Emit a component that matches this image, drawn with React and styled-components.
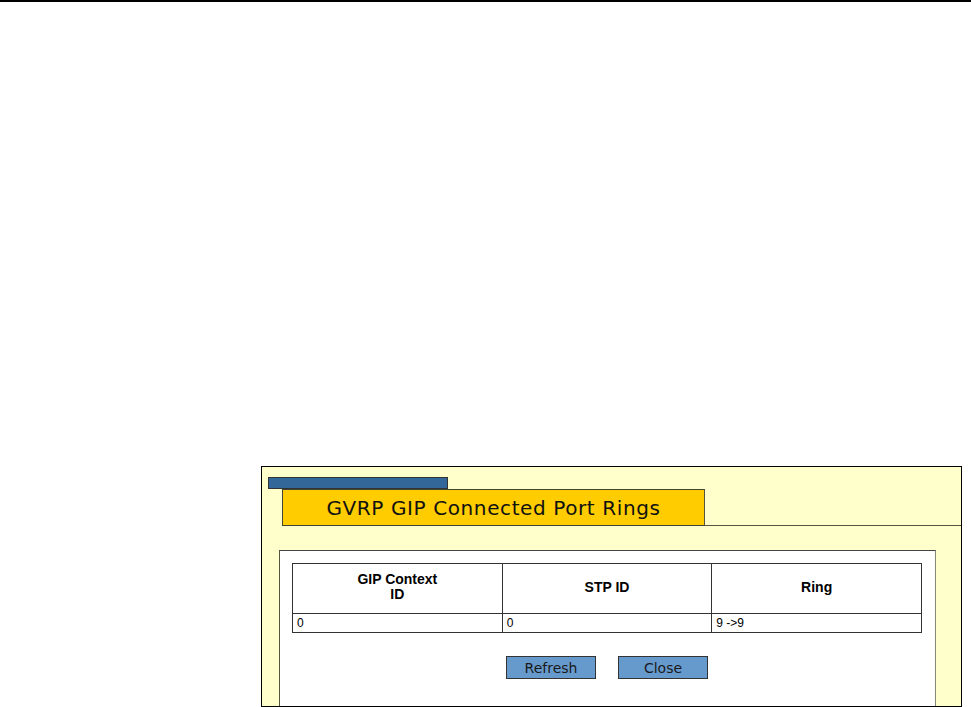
import React from 'react'
import styled, { createGlobalStyle } from 'styled-components';

const GlobalStyle = createGlobalStyle`
    html, body {
        margin: 0;
        padding: 0;
        background: #ffffff;
        font-family: "Liberation Sans", Arial, sans-serif;
    }
`;

const rows = [
    { context: '0', stp: '0', ring: '9 ->9' },
];

function App() {
  return (
    <PageStyled>
        <GlobalStyle/>
        <div className='top-rule'></div>
        <Frame>
            <BlueBar/>
            <TabRow>
                <Tab>GVRP GIP Connected Port Rings</Tab>
                <div className='fill'></div>
            </TabRow>
            <Panel>
                <RingTable>
                    <thead>
                        <tr>
                            <th>GIP Context<br/>ID</th>
                            <th>STP ID</th>
                            <th>Ring</th>
                        </tr>
                    </thead>
                    <tbody>
                        {rows.map((row, i) => (
                            <tr key={i}>
                                <td>{row.context}</td>
                                <td>{row.stp}</td>
                                <td>{row.ring}</td>
                            </tr>
                        ))}
                    </tbody>
                </RingTable>
                <ButtonRow>
                    <Button>Refresh</Button>
                    <Button>Close</Button>
                </ButtonRow>
            </Panel>
        </Frame>
    </PageStyled>
  )
}

const PageStyled = styled.div`
    width: 971px;
    height: 707px;
    overflow: hidden;
    .top-rule{
        height: 2px;
        background: #000;
    }
`;

const Frame = styled.div`
    box-sizing: border-box;
    display: flex;
    flex-direction: column;
    margin: 464px 0 0 261px;
    width: 701px;
    height: 241px;
    border: 1px solid #000;
    background: #ffffcc;
    padding-top: 10px;
`;

const BlueBar = styled.div`
    box-sizing: border-box;
    margin-left: 6px;
    width: 180px;
    height: 12px;
    background: #336699;
    border: 1px solid #333333;
`;

const TabRow = styled.div`
    display: flex;
    align-items: flex-end;
    .fill{
        flex: 1;
        border-bottom: 1px solid #555544;
    }
`;

const Tab = styled.div`
    box-sizing: border-box;
    margin-left: 20px;
    width: 423px;
    height: 37px;
    display: flex;
    align-items: center;
    justify-content: center;
    background: #ffcc00;
    border: 1px solid #444433;
    border-right-color: #555544;
    font-family: "DejaVu Sans", Verdana, sans-serif;
    font-size: 20px;
    letter-spacing: 0.6px;
    color: #111;
    padding-top: 1px;
`;

const Panel = styled.div`
    flex: 1;
    margin: 24px 25px 0 17px;
    padding: 12px 13px 0 12px;
    background: #ffffff;
    border-top: 1px solid #444;
    border-left: 1px solid #555544;
    border-right: 1px solid #888877;
`;

const RingTable = styled.table`
    width: 630px;
    border-collapse: collapse;
    th, td{
        border: 1px solid #333;
        color: #000;
    }
    th{
        width: 33.3%;
        height: 46px;
        font-size: 14px;
        font-weight: bold;
        line-height: 15px;
        text-align: center;
        padding: 0;
        padding-bottom: 3px;
    }
    td{
        height: 18px;
        font-size: 12px;
        padding: 0 4px;
        text-align: left;
        line-height: 16px;
    }
`;

const ButtonRow = styled.div`
    display: flex;
    justify-content: center;
    gap: 22px;
    margin-top: 23px;
    width: 630px;
`;

const Button = styled.button`
    box-sizing: border-box;
    width: 90px;
    height: 23px;
    background: #6699cc;
    border: 1px solid #333333;
    font-family: "DejaVu Sans", Tahoma, sans-serif;
    font-size: 14px;
    color: #1a1a1a;
    padding: 0;
`;

export default App
